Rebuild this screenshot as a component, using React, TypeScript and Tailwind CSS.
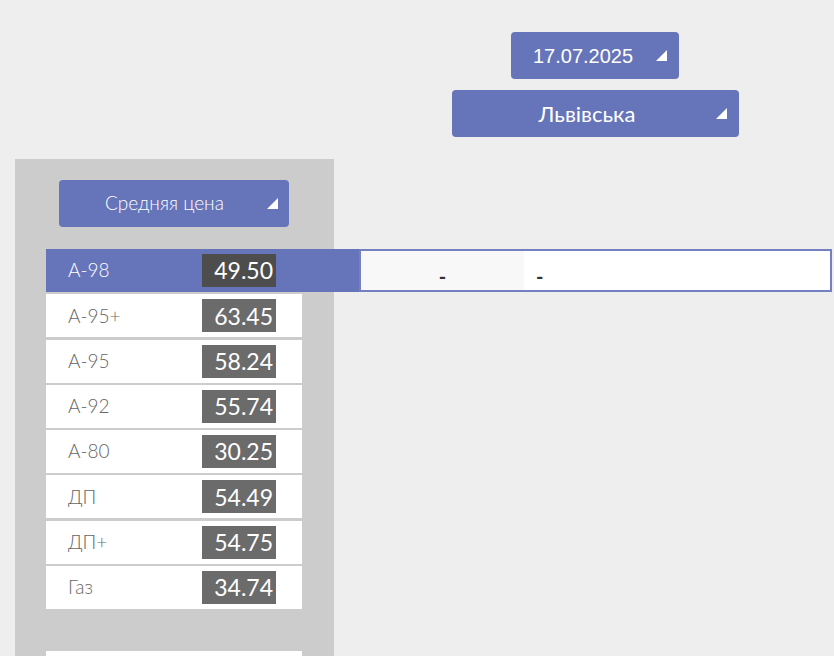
import React from "react";

const fuels = [
  { name: "A-98", price: "49.50" },
  { name: "A-95+", price: "63.45" },
  { name: "A-95", price: "58.24" },
  { name: "A-92", price: "55.74" },
  { name: "A-80", price: "30.25" },
  { name: "ДП", price: "54.49" },
  { name: "ДП+", price: "54.75" },
  { name: "Газ", price: "34.74" },
];

const gothic = { fontFamily: 'Lato, "Open Sans", sans-serif' };

function Caret() {
  return (
    <svg width="11" height="11" viewBox="0 0 11 11" className="shrink-0">
      <polygon points="11,0 11,11 0,11" fill="white" />
    </svg>
  );
}

export default function App() {
  const [selected, setSelected] = React.useState(0);

  return (
    <div className="h-[656px] w-[834px] overflow-hidden bg-[#eeeeee]">
      <div className="ml-[356px] flex w-[478px] flex-col items-center gap-[11px] pt-[32px]">
        <button className="flex h-[47px] w-[168px] items-center justify-between rounded-[4px] bg-[#6674b9] pl-[22px] pr-[12px] text-[20px] text-white [font-family:'Liberation_Sans',Arial,sans-serif]">
          <span>17.07.2025</span>
          <Caret />
        </button>
        <button
          style={gothic}
          className="relative flex h-[47px] w-[287px] items-center justify-center rounded-[4px] bg-[#6674b9] text-[22px] text-white"
        >
          <span className="-ml-[16px]">Львівська</span>
          <span className="absolute right-[12px] top-[18px]">
            <Caret />
          </span>
        </button>
      </div>

      <div className="ml-[15px] mt-[22px] h-[600px] w-[319px] bg-[#cccccc] pt-[21px]" style={gothic}>
        <button className="ml-[44px] flex h-[47px] w-[230px] items-center justify-between rounded-[4px] bg-[#6674b9] pl-[46px] pr-[11px] text-[19px] font-light text-white">
          <span>Средняя цена</span>
          <Caret />
        </button>

        <div className="ml-[31px] mt-[22px] flex flex-col gap-[2.3px]">
          {fuels.map((f, i) =>
            i === selected ? (
              <div key={f.name} className="flex h-[43px] w-[786px]">
                <div className="flex w-[313px] items-center bg-[#6674b9] pl-[22px]">
                  <span className="w-[134px] text-[19px] font-light text-white">{f.name}</span>
                  <span className="flex h-[33px] w-[74px] items-center justify-end bg-[#4d4d4d] pr-[3px] text-[23px] text-white">
                    {f.price}
                  </span>
                </div>
                <div className="flex flex-1 border-2 border-[#7580c0] bg-white text-[20px] font-bold leading-none text-[#333]">
                  <div className="flex w-[163px] items-center justify-center bg-[#f8f8f8] pt-[10px]">-</div>
                  <div className="flex items-center pl-[12px] pt-[10px]">-</div>
                </div>
              </div>
            ) : (
              <div
                key={f.name}
                onClick={() => setSelected(i)}
                className="flex h-[43px] w-[256px] cursor-pointer items-center bg-white pl-[22px]"
              >
                <span className="w-[134px] text-[19px] font-light text-[#666]">{f.name}</span>
                <span className="flex h-[33px] w-[74px] items-center justify-end bg-[#6b6b6b] pr-[3px] text-[23px] text-white">
                  {f.price}
                </span>
              </div>
            )
          )}
        </div>

        <div className="ml-[31px] mt-[42px] h-[20px] w-[256px] bg-white" />
      </div>
    </div>
  );
}
